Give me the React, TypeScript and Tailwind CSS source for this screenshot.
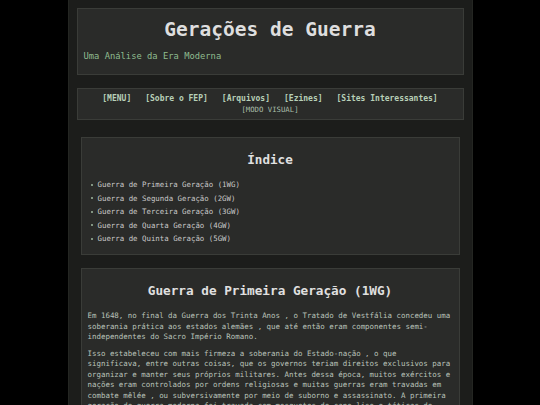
export default function App() {
  const indice = [
    "Guerra de Primeira Geração (1WG)",
    "Guerra de Segunda Geração (2GW)",
    "Guerra de Terceira Geração (3GW)",
    "Guerra de Quarta Geração (4GW)",
    "Guerra de Quinta Geração (5GW)",
  ];
  const nav = ["[MENU]", "[Sobre o FEP]", "[Arquivos]", "[Ezines]", "[Sites Interessantes]"];

  return (
    <div className="min-h-screen bg-black font-['DejaVu_Sans_Mono',monospace]">
      <div className="mx-auto w-[405px] min-h-screen bg-[#1c1d1b] border-x border-[#242622] pt-[8px] px-[8px] pb-4">
        {/* cabeçalho */}
        <header className="h-[67px] border border-[#3a3c38] bg-[#2a2b29] pt-[9px]">
          <h1 className="text-center text-[19.5px] leading-[24px] font-bold text-[#dedede]">
            Gerações de Guerra
          </h1>
          <p className="mt-[8px] pl-[6px] text-[8.8px] leading-[12px] text-[#8fbc8f]">Uma Análise da Era Moderna</p>
        </header>

        {/* navegação */}
        <nav className="mt-[13px] h-[32px] border border-[#3a3c38] bg-[#2a2b29] pt-[4px] text-center">
          <div className="flex justify-center gap-[14px] text-[8px] leading-[11px] font-bold text-[#b8d0b8]">
            {nav.map((n) => (
              <a key={n} href="#">{n}</a>
            ))}
          </div>
          <a href="#" className="mt-[1px] block text-[7.3px] leading-[10px] text-[#a9bfa9]">
            [MODO VISUAL]
          </a>
        </nav>

        <main className="px-[4px]">
          {/* índice */}
          <section className="mt-[17px] h-[118px] border border-[#3a3c38] bg-[#2a2b29] pt-[14px]">
            <h2 className="text-center text-[12.6px] leading-[16px] font-bold text-[#e0e0e0]">Índice</h2>
            <ul className="mt-[10px] pl-[9px]">
              {indice.map((t) => (
                <li key={t} className="flex items-center h-[13.5px] text-[7.4px] text-[#c8c8c8]">
                  <span className="mr-[5px] h-[2px] w-[2px] rounded-full bg-[#9fb89f]" />
                  <a href="#">{t}</a>
                </li>
              ))}
            </ul>
          </section>

          {/* conteúdo */}
          <section className="mt-[13px] border border-[#3a3c38] bg-[#2a2b29] px-[6px] pt-[14px] pb-3">
            <h2 className="text-center text-[12.7px] leading-[16px] font-bold text-[#e0e0e0]">
              Guerra de Primeira Geração (1WG)
            </h2>
            <div className="mt-[12px] text-[7.45px] leading-[10.5px] text-[#b9c2b9]">
              <p>
                Em 1648, no final da Guerra dos Trinta Anos , o Tratado de Vestfália concedeu uma soberania prática aos
                estados alemães , que até então eram componentes semi-independentes do Sacro Império Romano.
              </p>
              <p className="mt-[6px]">
                Isso estabeleceu com mais firmeza a soberania do Estado-nação , o que significava, entre outras coisas,
                que os governos teriam direitos exclusivos para organizar e manter seus próprios militares. Antes dessa
                época, muitos exércitos e nações eram controlados por ordens religiosas e muitas guerras eram travadas em
                combate mêlée , ou subversivamente por meio de suborno e assassinato. A primeira geração de guerra
                moderna foi travada com mosquetes de cano liso e táticas de linha e coluna.
              </p>
            </div>
          </section>
        </main>
      </div>
    </div>
  );
}
